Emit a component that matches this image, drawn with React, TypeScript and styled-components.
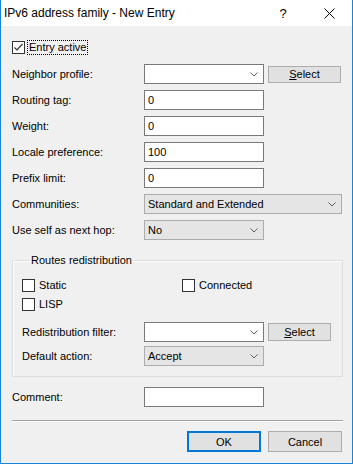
import React from 'react';
import styled, { createGlobalStyle } from 'styled-components';

const GlobalStyle = createGlobalStyle`
  html, body {
    margin: 0;
    padding: 0;
    background: #ffffff;
  }
  body {
    font-family: "Liberation Sans", Arial, sans-serif;
    color: #000;
  }
`;

const Window = styled.div`
  width: 353px;
  height: 464px;
  box-sizing: border-box;
  border: 1px solid #1883d7;
  border-top: none;
  display: flex;
  flex-direction: column;
  background: #f0f0f0;
`;

const TitleBar = styled.div`
  height: 26px;
  flex: none;
  background: #fff;
  display: flex;
  align-items: center;
  padding-left: 3px;
  font-size: 12px;
`;

const Title = styled.div`
  flex: 1;
`;

const TitleButton = styled.div`
  width: 46px;
  height: 26px;
  display: flex;
  align-items: center;
  justify-content: center;
  font-size: 13px;
`;

const Client = styled.div`
  flex: 1;
  padding: 14px 9px 0 11px;
  font-size: 11px;
  display: flex;
  flex-direction: column;
`;

const CheckRow = styled.label`
  height: 15px;
  display: flex;
  align-items: center;
`;

const Box = styled.span`
  width: 13px;
  height: 13px;
  box-sizing: border-box;
  border: 1px solid #333;
  background: #fff;
  display: inline-flex;
  align-items: center;
  justify-content: center;
  flex: none;
`;

const Focus = styled.span<{ $focused?: boolean }>`
  margin-left: 2px;
  padding: 0 1px;
  line-height: 13px;
  border: 1px dotted ${p => (p.$focused ? '#000' : 'transparent')};
`;

const Fields = styled.div<{ $top: number; $gap: number }>`
  display: flex;
  flex-direction: column;
  gap: ${p => p.$gap}px;
  margin-top: ${p => p.$top}px;
`;

const Row = styled.div`
  display: flex;
  align-items: center;
  height: 20px;
`;

const Label = styled.span<{ $w: number }>`
  width: ${p => p.$w}px;
  flex: none;
  white-space: nowrap;
`;

const Input = styled.div<{ $w?: number }>`
  width: ${p => p.$w ?? 120}px;
  height: 20px;
  flex: none;
  box-sizing: border-box;
  border: 1px solid #7a7a7a;
  background: #fff;
  padding-left: 3px;
  display: flex;
  align-items: center;
`;

const Combo = styled.div<{ $w?: number; $list?: boolean }>`
  width: ${p => p.$w ?? 120}px;
  height: 20px;
  flex: none;
  box-sizing: border-box;
  border: 1px solid ${p => (p.$list ? '#acacac' : '#7a7a7a')};
  background: ${p => (p.$list ? '#e5e5e5' : '#fff')};
  padding: 0 5px 0 3px;
  display: flex;
  align-items: center;
  justify-content: space-between;
`;

const Button = styled.div<{ $w: number; $h: number; $default?: boolean }>`
  width: ${p => p.$w}px;
  height: ${p => p.$h}px;
  flex: none;
  box-sizing: border-box;
  background: #e1e1e1;
  border: ${p => (p.$default ? '2px solid #0078d7' : '1px solid #adadad')};
  display: flex;
  align-items: center;
  justify-content: center;
  font-size: 11px;
`;

const SideButton = styled(Button)`
  margin-left: 4px;
`;

const Group = styled.fieldset`
  margin: 14px 0 0;
  padding: 11px 0 10px 9px;
  border: 1px solid #dcdcdc;
  box-shadow: inset 1px 1px 0 #fff;
  min-width: 0;
`;

const Legend = styled.legend`
  margin-left: 8px;
  padding: 0 1px;
  line-height: 13px;
  font-size: 11px;
`;

const CheckGrid = styled.div`
  display: grid;
  grid-template-columns: 160px auto;
  grid-auto-rows: 17px;
  row-gap: 2px;
`;

const Separator = styled.div`
  margin-top: 13px;
  height: 1px;
  background: #a0a0a0;
  border-bottom: 1px solid #fff;
`;

const Buttons = styled.div`
  margin-top: 9px;
  display: flex;
  justify-content: flex-end;
  gap: 7px;
  padding-right: 1px;
`;

const Chevron = () => (
  <svg width="8" height="5" viewBox="0 0 8 5">
    <polyline points="0.5,0.5 4,4 7.5,0.5" fill="none" stroke="#606060" strokeWidth="1" />
  </svg>
);

const Tick = () => (
  <svg width="11" height="11" viewBox="0 0 11 11">
    <polyline points="1.5,5.5 4,8 9.5,2" fill="none" stroke="#333" strokeWidth="1.2" />
  </svg>
);

const CheckBox = ({ label, checked, focused }: { label: string; checked?: boolean; focused?: boolean }) => (
  <CheckRow>
    <Box>{checked && <Tick />}</Box>
    <Focus $focused={focused}>{label}</Focus>
  </CheckRow>
);

const App = () => (
  <>
    <GlobalStyle />
    <Window>
      <TitleBar>
        <Title>IPv6 address family - New Entry</Title>
        <TitleButton>?</TitleButton>
        <TitleButton>
          <svg width="11" height="11" viewBox="0 0 11 11">
            <path d="M0.5 0.5 L10.5 10.5 M10.5 0.5 L0.5 10.5" stroke="#000" strokeWidth="1" />
          </svg>
        </TitleButton>
      </TitleBar>
      <Client>
        <CheckBox label="Entry active" checked focused />

        <Fields $top={9} $gap={6}>
          <Row>
            <Label $w={132}>Neighbor profile:</Label>
            <Combo><span /><Chevron /></Combo>
            <SideButton $w={73} $h={17}><span><u>S</u>elect</span></SideButton>
          </Row>
          <Row>
            <Label $w={132}>Routing tag:</Label>
            <Input>0</Input>
          </Row>
          <Row>
            <Label $w={132}>Weight:</Label>
            <Input>0</Input>
          </Row>
          <Row>
            <Label $w={132}>Locale preference:</Label>
            <Input>100</Input>
          </Row>
          <Row>
            <Label $w={132}>Prefix limit:</Label>
            <Input>0</Input>
          </Row>
          <Row>
            <Label $w={132}>Communities:</Label>
            <Combo $w={198} $list>Standard and Extended<Chevron /></Combo>
          </Row>
          <Row>
            <Label $w={132}>Use self as next hop:</Label>
            <Combo $list>No<Chevron /></Combo>
          </Row>
        </Fields>

        <Group>
          <Legend>Routes redistribution</Legend>
          <CheckGrid>
            <CheckBox label="Static" />
            <CheckBox label="Connected" />
            <CheckBox label="LISP" />
          </CheckGrid>
          <Fields $top={8} $gap={4}>
            <Row>
              <Label $w={122}>Redistribution filter:</Label>
              <Combo><span /><Chevron /></Combo>
              <SideButton $w={63} $h={18}><span><u>S</u>elect</span></SideButton>
            </Row>
            <Row>
              <Label $w={122}>Default action:</Label>
              <Combo $list>Accept<Chevron /></Combo>
            </Row>
          </Fields>
        </Group>

        <Fields $top={10} $gap={0}>
          <Row>
            <Label $w={132}>Comment:</Label>
            <Input />
          </Row>
        </Fields>

        <Separator />

        <Buttons>
          <Button $w={74} $h={21} $default>OK</Button>
          <Button $w={74} $h={21}>Cancel</Button>
        </Buttons>
      </Client>
    </Window>
  </>
);

export default App;
